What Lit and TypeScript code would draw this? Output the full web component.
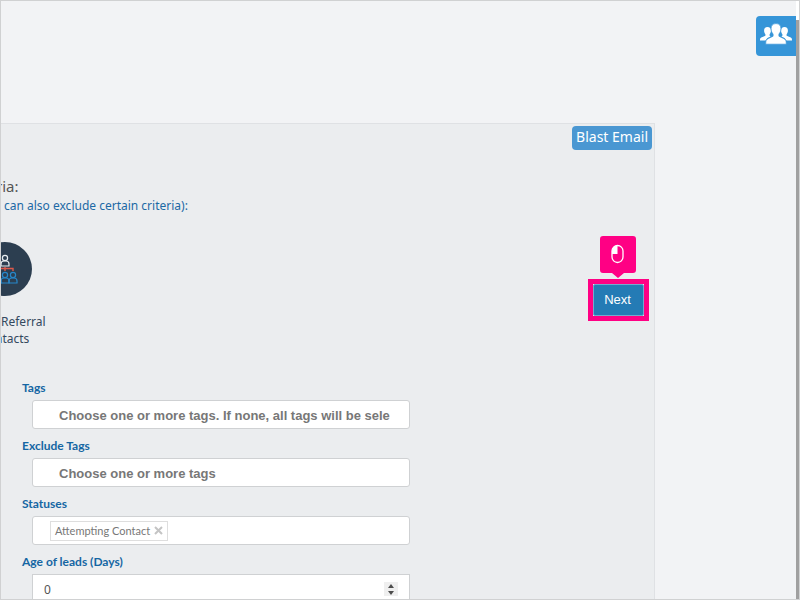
import { LitElement, html, css, svg } from "lit";
import { customElement } from "lit/decorators.js";

const person = (x: number, y: number) => svg`
  <circle cx=${x} cy=${y} r="2.6"></circle>
  <path d="M${x - 4} ${y + 8} v-2 q0 -3 3 -3 h2 q3 0 3 3 v2 z"></path>`;

@customElement("app-root")
export class AppRoot extends LitElement {
  static styles = css`
    :host {
      display: block;
      font-family: "Noto Sans", sans-serif;
      font-size: 12px;
      color: #34495e;
    }
    * {
      box-sizing: border-box;
    }
    button,
    input {
      font: inherit;
      margin: 0;
    }
    .page {
      position: relative;
      display: flex;
      height: 100vh;
      overflow: hidden;
      border: 1px solid #d0d1d2;
      background: #f2f3f5;
    }
    .main {
      flex: 1;
      display: flex;
      min-width: 0;
      padding: 122px 141px 0 0;
    }
    .track {
      width: 3px;
      padding-top: 19px;
      background: #fff;
    }
    .thumb {
      height: 100%;
      background: #a0a0a0;
    }
    .contacts {
      position: absolute;
      top: 15px;
      right: 3px;
      width: 40px;
      height: 40px;
      padding: 0 0 4px 4px;
      border: 0;
      border-radius: 4px 0 0 4px;
      background: #3695d8;
    }
    .contacts svg {
      display: block;
    }
    .panel {
      flex: 1;
      display: flex;
      justify-content: space-between;
      min-width: 0;
      border: solid #dfe1e4;
      border-width: 1px 1px 0 0;
      background: #ebedef;
    }
    .content {
      flex: 1;
      min-width: 0;
      padding-top: 52px;
    }
    h1 {
      margin: 0 0 0 -5px;
      font-size: 15px;
      font-weight: 400;
      line-height: 20px;
      color: #555;
    }
    .hint {
      margin: 0 0 26px 3px;
      line-height: 20px;
      color: #1c69a5;
    }
    .badge {
      display: block;
      margin: 0 0 17px -23px;
    }
    .caption {
      margin: 0 0 33px;
      line-height: 17px;
    }
    .caption span {
      display: block;
    }
    .caption .cut {
      margin-left: -6px;
    }
    form {
      display: grid;
      gap: 9px;
      max-width: 409px;
      padding-left: 21px;
    }
    .field {
      display: grid;
      gap: 4px;
    }
    label {
      font-family: Lato, sans-serif;
      font-size: 12px;
      font-weight: 700;
      line-height: 16px;
      color: #1566a3;
    }
    .box {
      position: relative;
      display: flex;
      align-items: center;
      height: 29px;
      margin-left: 10px;
      border: 1px solid #cfd1d3;
      border-radius: 3px;
      background: #fff;
    }
    .box input {
      flex: 1;
      min-width: 0;
      height: 27px;
      padding: 2px 11px 0 26px;
      border: 0;
      outline: 0;
      background: none;
      color: #555;
    }
    .box input::placeholder {
      font: 700 13px "Liberation Sans", sans-serif;
      color: #777;
      opacity: 1;
    }
    .box.square {
      border-radius: 0;
    }
    .box input[type="number"] {
      padding: 2px 11px 0;
      appearance: textfield;
    }
    .spin {
      position: absolute;
      top: 7px;
      right: 11px;
    }
    .chip {
      display: flex;
      align-items: center;
      gap: 4px;
      height: 20px;
      margin-left: 17px;
      padding: 0 4px;
      border: 1px solid #dedede;
      font-family: Lato, sans-serif;
      font-size: 11px;
      white-space: nowrap;
      color: #777;
    }
    .chip button {
      display: flex;
      padding: 0;
      border: 0;
      background: none;
    }
    .actions {
      display: flex;
      flex-direction: column;
      align-items: flex-end;
      padding: 2px 2px 0 0;
    }
    .blast {
      height: 24px;
      padding: 0 4px 2px;
      border: 0;
      border-radius: 4px;
      background: #4a97d2;
      font-size: 14px;
      line-height: 22px;
      color: #fff;
    }
    .step {
      position: relative;
      margin: 129px 3px 0 0;
      border: 5px solid #ff0084;
    }
    .next {
      display: block;
      width: 51px;
      height: 32px;
      padding: 0 2px 2px 0;
      border: 1px solid #74a9cf;
      border-radius: 2px;
      background: #247bb5;
      font: 13px "Liberation Sans", sans-serif;
      color: #fff;
    }
    .tip {
      position: absolute;
      left: 7px;
      bottom: 38px;
    }
  `;

  private tagField(id: string, label: string, placeholder: string) {
    return html`<div class="field">
      <label for=${id}>${label}</label>
      <div class="box"><input id=${id} type="text" placeholder=${placeholder} /></div>
    </div>`;
  }

  render() {
    return html`<div class="page">
      <main class="main">
        <section class="panel">
          <div class="content">
            <h1>ria:</h1>
            <p class="hint">can also exclude certain criteria):</p>
            <svg class="badge" width="54" height="54" viewBox="0 0 54 54" aria-hidden="true">
              <circle cx="27" cy="27" r="27" fill="#2c3e50"></circle>
              <g fill="none" stroke="#e8edf0" stroke-width="1.2">${person(27, 16)}</g>
              <path d="M19 29v-2.500h16v2.500M27 25v4" fill="none" stroke="#dd5a4b" stroke-width="1.4"></path>
              <g fill="none" stroke="#2786c8" stroke-width="1.2">
                ${person(19, 33)}${person(27, 33)}${person(35, 33)}
              </g>
            </svg>
            <p class="caption"><span>Referral</span><span class="cut">ntacts</span></p>
            <form>
              ${this.tagField("tags", "Tags", "Choose one or more tags. If none, all tags will be sele")}
              ${this.tagField("exclude", "Exclude Tags", "Choose one or more tags")}
              <div class="field">
                <label for="statuses">Statuses</label>
                <div class="box">
                  <span class="chip">Attempting Contact
                    <button type="button" aria-label="Remove Attempting Contact">
                      <svg width="9" height="9" viewBox="0 0 9 9">
                        <path d="M1 1l7 7M8 1l-7 7" stroke="#c4c4c4" stroke-width="2"></path>
                      </svg>
                    </button>
                  </span>
                  <input id="statuses" type="text" />
                </div>
              </div>
              <div class="field">
                <label for="age">Age of leads (Days)</label>
                <div class="box square">
                  <input id="age" type="number" value="0" />
                  <svg class="spin" width="14" height="14" viewBox="0 0 14 14" aria-hidden="true">
                    <path d="M0 0h14v14h-14z" fill="#efefef"></path>
                    <path d="M4 6l3-4 3 4zM4 9h6l-3 4z" fill="#4d4d4d"></path>
                  </svg>
                </div>
              </div>
            </form>
          </div>
          <div class="actions">
            <button class="blast" type="button">Blast Email</button>
            <div class="step">
              <svg class="tip" width="36" height="42" viewBox="0 0 36 42" aria-hidden="true">
                <path d="M3 0h30q3 0 3 3v31q0 3-3 3h-9l-6 5-6-5h-9q-3 0-3-3v-31q0-3 3-3z" fill="#ff0084"></path>
                <rect x="12" y="9.500" width="11" height="17" rx="5.500" fill="none" stroke="#fff" stroke-width="1.300"></rect>
                <path d="M12 18v-3a5.500 5.500 0 0 1 5.500-5.500v8.500z" fill="#fff"></path>
              </svg>
              <button class="next" type="button">Next</button>
            </div>
          </div>
        </section>
      </main>
      <div class="track"><div class="thumb"></div></div>
      <button class="contacts" type="button" aria-label="Contacts">
        <svg width="32" height="22" viewBox="0 0 32 22" fill="#fff" aria-hidden="true">
          <path d="M7.500 4c2.300 0 3.400 1.400 3.400 3.600 0 1.600-.5 2.800-1.300 3.600v1.600l1 .6c-2.200 1-4.400 1.800-5 4.100H0c0-2.200.4-2.600 1.800-3.200l3.600-1.500v-1.600C4.600 10.400 4.100 9.200 4.100 7.600 4.100 5.400 5.200 4 7.500 4z"></path>
          <path d="M24.500 4c-2.300 0-3.400 1.400-3.400 3.600 0 1.600.5 2.800 1.300 3.600v1.600l-1 .6c2.200 1 4.400 1.800 5 4.100H32c0-2.200-.4-2.600-1.800-3.200l-3.600-1.500v-1.600c.8-.8 1.300-2 1.300-3.600 0-2.200-1.100-3.600-3.400-3.600z"></path>
          <path d="M16 .6c3.400 0 4.900 2 4.900 5 0 2.400-.8 4.200-2 5.400v2.200l4.600 2.200c2.200 1 2.800 2 2.800 5.800H5.700c0-3.800.6-4.800 2.800-5.800l4.600-2.200V11c-1.200-1.200-2-3-2-5.400 0-3 1.500-5 4.900-5z" stroke="#3695d8" stroke-width="0.700"></path>
        </svg>
      </button>
    </div>`;
  }
}
